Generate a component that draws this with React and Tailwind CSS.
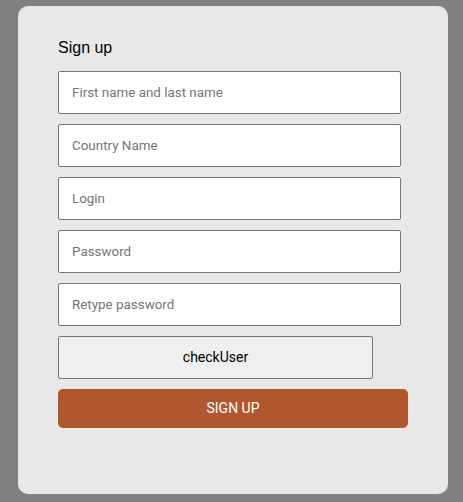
export default function App() {
  const fields = ["First name and last name", "Country Name", "Login", "Password", "Retype password"];
  return (
    <div className="w-[463px] h-[502px] bg-[#808080] pt-[6px] pl-[18px]" style={{ fontFamily: '"Liberation Sans", Arial, sans-serif' }}>
      <div className="w-[430px] h-[488px] bg-[#e8e8e8] rounded-[10px] pt-[30px] px-[40px]">
        <h1 className="text-[16px] leading-[24px] text-black mb-[11px]">Sign up</h1>
        <div className="flex flex-col gap-[10px] font-['Roboto',sans-serif]">
          {fields.map((f) => (
            <input
              key={f}
              type={f.toLowerCase().includes("password") ? "password" : "text"}
              placeholder={f}
              className="w-[343px] h-[43px] bg-white border border-[#767676] rounded-[2px] px-[13px] text-[13.4px] font-['Roboto',sans-serif] placeholder:text-[#757575] outline-none"
            />
          ))}
          <button className="w-[315px] h-[43px] bg-[#efefef] border border-[#767676] rounded-[2px] text-[14px] text-black font-['Roboto',sans-serif]">checkUser</button>
          <button className="w-[350px] h-[39px] bg-[#b05730] rounded-[5px] text-[14px] text-white uppercase font-['Roboto',sans-serif]">Sign up</button>
        </div>
      </div>
    </div>
  );
}
